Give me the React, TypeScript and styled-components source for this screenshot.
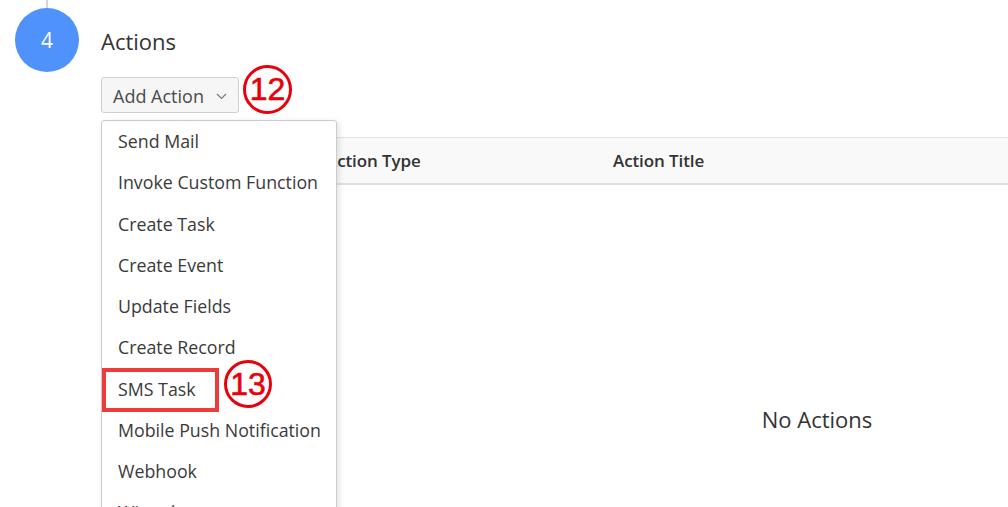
import React from "react";
import styled, { createGlobalStyle } from "styled-components";

const GlobalStyle = createGlobalStyle`
  html, body {
    margin: 0;
    padding: 0;
    background: #ffffff;
    overflow: hidden;
  }
  body {
    font-family: "Open Sans", "Noto Sans", sans-serif;
    color: #333333;
  }
`;

const menuItems = [
  "Send Mail",
  "Invoke Custom Function",
  "Create Task",
  "Create Event",
  "Update Fields",
  "Create Record",
  "SMS Task",
  "Mobile Push Notification",
  "Webhook",
  "Wizard",
];

const App = () => (
  <>
    <GlobalStyle />
    <Page>
      <StepRail>
        <RailLine />
        <StepBadge>4</StepBadge>
      </StepRail>
      <StepBody>
        <Title>Actions</Title>
        <AddButton>
          Add Action
          <Chevron width="11" height="7" viewBox="0 0 11 7">
            <path d="M1 1l4.5 4.5L10 1" fill="none" stroke="#777" strokeWidth="1.2" />
          </Chevron>
        </AddButton>
        <Table>
          <HeaderRow>
            <HeaderCell />
            <HeaderCell>Action Type</HeaderCell>
            <HeaderCell>Action Title</HeaderCell>
          </HeaderRow>
          <EmptyBody>No Actions</EmptyBody>
        </Table>

        <Menu>
          {menuItems.map((item) => (
            <MenuItem key={item}>
              {item}
              {item === "SMS Task" && <Highlight />}
            </MenuItem>
          ))}
        </Menu>

        <Callout $left={142} $top={65} $size={49}>12</Callout>
        <Callout $left={123} $top={360} $size={48}>13</Callout>
      </StepBody>
    </Page>
  </>
);

export default App;

const Page = styled.div`
  display: flex;
  align-items: flex-start;
  height: 507px;
`;

const StepRail = styled.div`
  display: flex;
  flex-direction: column;
  align-items: center;
  margin-left: 15px;
  width: 64px;
`;

const RailLine = styled.div`
  width: 2px;
  height: 8px;
  background: #d6d6d6;
`;

const StepBadge = styled.div`
  width: 64px;
  height: 64px;
  border-radius: 50%;
  background: #4f92fb;
  color: #ffffff;
  display: flex;
  align-items: center;
  justify-content: center;
  font-size: 21px;
`;

const StepBody = styled.div`
  position: relative;
  margin-left: 22px;
  display: flex;
  flex-direction: column;
  align-items: flex-start;
`;

const Title = styled.h2`
  margin: 26px 0 0;
  font-size: 22px;
  font-weight: 400;
  line-height: 30px;
  color: #333333;
`;

const AddButton = styled.button`
  margin-top: 21px;
  height: 36px;
  width: 138px;
  display: flex;
  align-items: center;
  justify-content: space-between;
  padding: 2px 11px 0 11px;
  font-family: "Open Sans", sans-serif;
  font-size: 18px;
  color: #4a4a4a;
  background: #f6f6f6;
  border: 1px solid #cfcfcf;
  border-radius: 3px;
`;

const Chevron = styled.svg`
  margin-top: 1px;
`;

const Table = styled.div`
  margin-top: 24px;
  width: 1432px;
`;

const HeaderRow = styled.div`
  display: grid;
  grid-template-columns: 225px 287px 1fr;
  align-items: center;
  height: 45px;
  background: #f9f9f9;
  border-top: 1px solid #e2e2e2;
  border-bottom: 2px solid #e0e0e0;
`;

const HeaderCell = styled.div`
  font-size: 17px;
  font-weight: 600;
  color: #333333;
  letter-spacing: -0.1px;
`;

const EmptyBody = styled.div`
  padding-top: 220px;
  text-align: center;
  font-size: 22px;
  line-height: 28px;
  color: #333333;
`;

const Menu = styled.div`
  position: absolute;
  left: 0;
  top: 120px;
  width: 234px;
  height: 420px;
  background: #ffffff;
  border: 1px solid #cccccc;
  border-radius: 3px;
  box-shadow: 2px 2px 6px rgba(0, 0, 0, 0.12);
  overflow: hidden;
`;

const MenuItem = styled.div`
  position: relative;
  height: 41.25px;
  line-height: 40px;
  padding-left: 16px;
  font-size: 17.8px;
  color: #3a3a3a;
  white-space: nowrap;
`;

const Highlight = styled.span`
  position: absolute;
  left: 0;
  top: 0;
  width: 117px;
  height: 44px;
  box-sizing: border-box;
  border: 4px solid #ef3a3a;
  margin-top: -1px;
`;

const Callout = styled.div<{ $left: number; $top: number; $size: number }>`
  position: absolute;
  left: ${(p) => p.$left}px;
  top: ${(p) => p.$top}px;
  width: ${(p) => p.$size}px;
  height: ${(p) => p.$size}px;
  box-sizing: border-box;
  border: 3px solid #e8000b;
  border-radius: 50%;
  background: #ffffff;
  color: #e8000b;
  display: flex;
  align-items: center;
  justify-content: center;
  font-family: "Liberation Sans", Arial, sans-serif;
  font-size: 32px;
  -webkit-text-stroke: 0.6px #e8000b;
`;
